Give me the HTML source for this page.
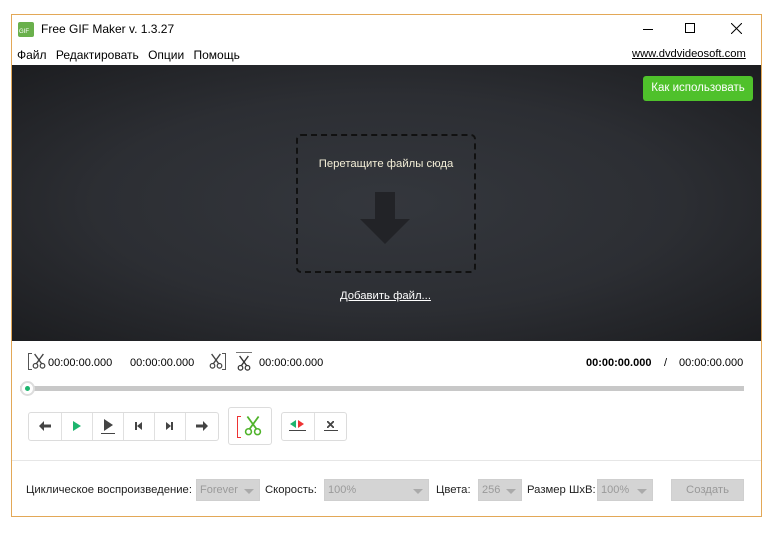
<!DOCTYPE html>
<html><head><meta charset="utf-8"><style>
*{margin:0;padding:0;box-sizing:border-box}
body{width:777px;height:535px;background:#fff;font-family:"Liberation Sans","DejaVu Sans",sans-serif;position:relative;overflow:hidden;font-size:12px;color:#000}
.abs{position:absolute}
.win{left:11px;top:14px;width:751px;height:503px;border:1px solid #e3a857;background:#fff}
.dark{left:12px;top:65px;width:749px;height:276px;background:radial-gradient(ellipse at 50% 50%,#34373d 0%,#2c2e33 55%,#1c1d20 100%)}
.t{white-space:nowrap}
.btn{border:1px solid #dcdcdc;border-radius:3px;background:#fff}
.sel{background:#d4d4d4;border:1px solid #cfcfcf;color:#9a9a9a;height:22px;font-size:11px;padding:4px 3px}
.sel:after{content:"";position:absolute;right:5px;top:9px;border-left:5px solid transparent;border-right:5px solid transparent;border-top:5px solid #aaa}
.lbl{font-size:11.3px;color:#222}
.tm{font-size:11px}
</style></head><body>
<svg width="0" height="0" style="position:absolute"><defs>
<symbol id="sc" viewBox="0 0 16 18"><path d="M3 1 L11 12 M13 1 L5 12" stroke="currentColor" stroke-width="1.6" fill="none"/><circle cx="4" cy="14.5" r="2.6" stroke="currentColor" stroke-width="1.4" fill="none"/><circle cx="12" cy="14.5" r="2.6" stroke="currentColor" stroke-width="1.4" fill="none"/></symbol>
</defs></svg>
<div class="abs win"></div>
<div class="abs" style="left:18px;top:22px;width:16px;height:15px;background:#6ab04c;border-radius:2px"></div>
<div class="abs t" style="left:19px;top:29px;font-size:6px;color:#fff">GIF</div>
<div class="abs t" style="left:41px;top:22px;font-size:12px">Free GIF Maker v. 1.3.27</div>
<div class="abs" style="left:643px;top:29px;width:10px;height:1px;background:#000"></div>
<div class="abs" style="left:685px;top:23px;width:10px;height:10px;border:1px solid #000"></div>
<svg class="abs" style="left:731px;top:23px" width="11" height="11"><path d="M0 0L11 11M11 0L0 11" stroke="#000" stroke-width="1"/></svg>
<div class="abs t" style="left:17px;top:48px;font-size:12px;word-spacing:6px">Файл Редактировать Опции Помощь</div>
<div class="abs t" style="left:632px;top:48px;font-size:11.2px;text-decoration:underline">www.dvdvideosoft.com</div>
<div class="abs dark"></div>
<div class="abs t" style="left:643px;top:76px;width:110px;height:25px;background:#4fc12b;border-radius:3px;color:#fff;font-size:11.5px;text-align:center;line-height:25px">Как использовать</div>
<div class="abs" style="left:296px;top:134px;width:180px;height:139px;border:2px dashed #111;border-radius:5px"></div>
<div class="abs t" style="left:296px;top:158px;width:180px;text-align:center;color:#f4efd8;font-size:11.3px">Перетащите файлы сюда</div>
<div class="abs" style="left:375px;top:192px;width:20px;height:27px;background:#222327"></div>
<div class="abs" style="left:360px;top:219px;border-left:25px solid transparent;border-right:25px solid transparent;border-top:25px solid #222327"></div>
<div class="abs t" style="left:340px;top:290px;color:#fff;text-decoration:underline;font-size:11.3px">Добавить файл...</div>
<div class="abs" style="left:28px;top:353px;width:4px;height:17px;border:1px solid #555;border-right:none"></div>
<svg class="abs" style="left:32px;top:353px;color:#444" width="14" height="16"><use href="#sc"/></svg>
<div class="abs t tm" style="left:48px;top:357px">00:00:00.000</div>
<div class="abs t tm" style="left:130px;top:357px">00:00:00.000</div>
<svg class="abs" style="left:209px;top:353px;color:#444" width="14" height="16"><use href="#sc"/></svg>
<div class="abs" style="left:222px;top:353px;width:4px;height:17px;border:1px solid #555;border-left:none"></div>
<div class="abs" style="left:236px;top:352px;width:16px;height:1px;background:#777"></div>
<svg class="abs" style="left:237px;top:355px;color:#333" width="14" height="16"><use href="#sc"/></svg>
<div class="abs t tm" style="left:259px;top:357px">00:00:00.000</div>
<div class="abs t tm" style="left:586px;top:357px;font-weight:bold">00:00:00.000</div>
<div class="abs t tm" style="left:664px;top:357px">/</div>
<div class="abs t tm" style="left:679px;top:357px">00:00:00.000</div>
<div class="abs" style="left:20px;top:386px;width:724px;height:5px;background:#c8c8c8"></div>
<div class="abs" style="left:20px;top:381px;width:15px;height:15px;border-radius:50%;background:#fff;border:2px solid #ddd"></div>
<div class="abs" style="left:25px;top:386px;width:5px;height:5px;border-radius:50%;background:#1db56e"></div>
<div class="abs btn" style="left:28px;top:412px;width:191px;height:29px"></div>
<div class="abs" style="left:61px;top:413px;width:1px;height:27px;background:#e0e0e0"></div>
<div class="abs" style="left:92px;top:413px;width:1px;height:27px;background:#e0e0e0"></div>
<div class="abs" style="left:123px;top:413px;width:1px;height:27px;background:#e0e0e0"></div>
<div class="abs" style="left:154px;top:413px;width:1px;height:27px;background:#e0e0e0"></div>
<div class="abs" style="left:185px;top:413px;width:1px;height:27px;background:#e0e0e0"></div>
<svg class="abs" style="left:39px;top:421px" width="12" height="10"><path d="M0 5L5 0V3.5H12V6.5H5V10Z" fill="#444"/></svg>
<div class="abs" style="left:73px;top:421px;border-top:5px solid transparent;border-bottom:5px solid transparent;border-left:8px solid #1db56e"></div>
<div class="abs" style="left:104px;top:419px;border-top:6px solid transparent;border-bottom:6px solid transparent;border-left:9px solid #444"></div>
<div class="abs" style="left:101px;top:433px;width:14px;height:1px;background:#444"></div>
<div class="abs" style="left:135px;top:422px;width:2px;height:8px;background:#444"></div>
<div class="abs" style="left:137px;top:422px;border-top:4px solid transparent;border-bottom:4px solid transparent;border-right:5px solid #444"></div>
<div class="abs" style="left:166px;top:422px;border-top:4px solid transparent;border-bottom:4px solid transparent;border-left:5px solid #444"></div>
<div class="abs" style="left:171px;top:422px;width:2px;height:8px;background:#444"></div>
<svg class="abs" style="left:196px;top:421px" width="12" height="10"><path d="M12 5L7 0V3.5H0V6.5H7V10Z" fill="#444"/></svg>
<div class="abs btn" style="left:228px;top:407px;width:44px;height:38px"></div>
<div class="abs" style="left:237px;top:416px;width:4px;height:22px;border:1.5px solid #e33;border-right:none"></div>
<svg class="abs" style="left:244px;top:415px;color:#4fb32a" width="18" height="21"><use href="#sc"/></svg>
<div class="abs btn" style="left:281px;top:412px;width:66px;height:29px"></div>
<div class="abs" style="left:314px;top:413px;width:1px;height:27px;background:#e0e0e0"></div>
<div class="abs" style="left:290px;top:420px;border-top:4px solid transparent;border-bottom:4px solid transparent;border-right:6px solid #1db56e"></div>
<div class="abs" style="left:298px;top:420px;border-top:4px solid transparent;border-bottom:4px solid transparent;border-left:6px solid #e33"></div>
<div class="abs" style="left:289px;top:430px;width:17px;height:1px;background:#444"></div>
<svg class="abs" style="left:327px;top:421px" width="7" height="7"><path d="M0 0L7 7M7 0L0 7" stroke="#444" stroke-width="1.8"/></svg>
<div class="abs" style="left:324px;top:430px;width:14px;height:1px;background:#444"></div>
<div class="abs" style="left:12px;top:460px;width:749px;height:1px;background:#e6e6e6"></div>
<div class="abs t lbl" style="left:26px;top:484px">Циклическое воспроизведение:</div>
<div class="abs sel" style="left:196px;top:479px;width:64px">Forever</div>
<div class="abs t lbl" style="left:265px;top:484px">Скорость:</div>
<div class="abs sel" style="left:324px;top:479px;width:105px">100%</div>
<div class="abs t lbl" style="left:436px;top:484px">Цвета:</div>
<div class="abs sel" style="left:478px;top:479px;width:44px">256</div>
<div class="abs t lbl" style="left:527px;top:484px">Размер ШхВ:</div>
<div class="abs sel" style="left:597px;top:479px;width:56px">100%</div>
<div class="abs" style="left:671px;top:479px;width:73px;height:22px;background:#d4d4d4;border:1px solid #cfcfcf;color:#999;text-align:center;line-height:20px;font-size:11.3px">Создать</div>
</body></html>
